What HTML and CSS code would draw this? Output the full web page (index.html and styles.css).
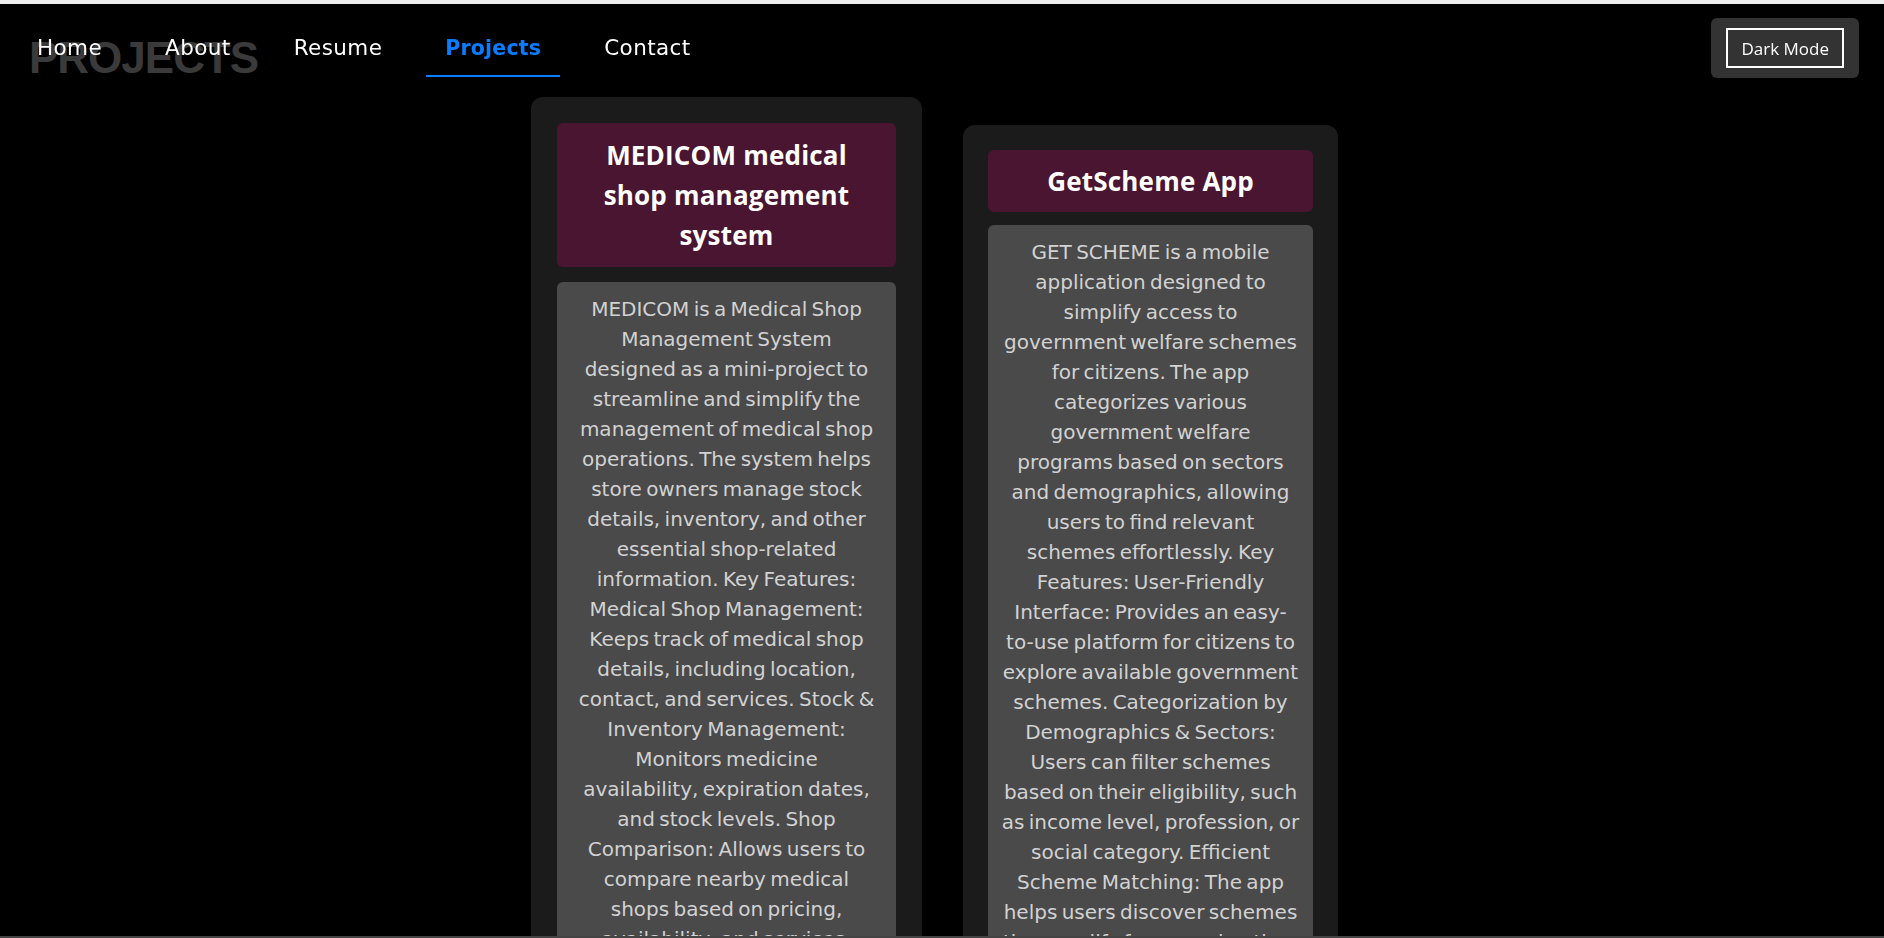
FILE: index.html
```html
<!DOCTYPE html>
<html lang="en">
<head>
<meta charset="utf-8">
<title>Projects</title>
<link rel="stylesheet" href="styles.css">
</head>
<body>
<header class="site-header">
  <nav class="nav">
    <a class="nav-link" href="#">Home</a>
    <a class="nav-link" href="#">About</a>
    <a class="nav-link" href="#">Resume</a>
    <a class="nav-link active" href="#">Projects</a>
    <a class="nav-link" href="#">Contact</a>
  </nav>
  <div class="theme-box">
    <button class="theme-btn">Dark Mode</button>
  </div>
</header>

<main class="projects">
  <h2 class="projects-title">PROJECTS</h2>
  <div class="card-row">
    <article class="card card-wide">
      <h3 class="card-title">MEDICOM medical shop management system</h3>
      <p class="card-desc">MEDICOM is a Medical Shop Management System designed as a mini-project to streamline and simplify the management of medical shop operations. The system helps store owners manage stock details, inventory, and other essential shop-related information. Key Features: Medical Shop Management: Keeps track of medical shop details, including location, contact, and services. Stock &amp; Inventory Management: Monitors medicine availability, expiration dates, and stock levels. Shop Comparison: Allows users to compare nearby medical shops based on pricing, availability, and services. Billing System: Generates bills and maintains records of sales transactions.</p>
    </article>
    <article class="card card-narrow">
      <h3 class="card-title">GetScheme App</h3>
      <p class="card-desc">GET SCHEME is a mobile application designed to simplify access to government welfare schemes for citizens. The app categorizes various government welfare programs based on sectors and demographics, allowing users to find relevant schemes effortlessly. Key Features: User-Friendly Interface: Provides an easy-to-use platform for citizens to explore available government schemes. Categorization by Demographics &amp; Sectors: Users can filter schemes based on their eligibility, such as income level, profession, or social category. Efficient Scheme Matching: The app helps users discover schemes they qualify for, ensuring they receive the benefits they are entitled to.</p>
    </article>
  </div>
</main>
<div class="window-edge"></div>
</body>
</html>
```

FILE: styles.css
```css
* { box-sizing: border-box; }

html { background: #000; }

body {
  margin: 0;
  background: #000;
  color: #fff;
  font-family: "DejaVu Sans", "Open Sans", sans-serif;
  border-top: 4px solid #efefef;
  min-height: 100vh;
}

.site-header {
  position: fixed;
  top: 4px;
  left: 0;
  right: 0;
  display: flex;
  justify-content: space-between;
  align-items: flex-start;
  padding: 0 25px 0 18px;
  z-index: 10;
}

.nav {
  display: flex;
  gap: 25px;
  margin-top: 17px;
}

.nav-link {
  display: block;
  padding: 12px 19px;
  font-size: 21.5px;
  letter-spacing: 0.4px;
  line-height: 30px;
  color: #fff;
  text-decoration: none;
  border-bottom: 2px solid transparent;
}

.nav-link.active {
  color: #0a7cff;
  font-weight: 700;
  font-size: 20.5px;
  letter-spacing: 0.2px;
  border-bottom-color: #0a7cff;
}

.theme-box {
  margin-top: 14px;
  padding: 10px 15px;
  background: #333;
  border-radius: 6px;
}

.theme-btn {
  display: block;
  height: 40px;
  padding: 0 13px;
  background: transparent;
  border: 2px solid #fff;
  color: #fff;
  font-family: "Open Sans", sans-serif;
  font-size: 17px;
}

.projects {
  padding: 31px 41px 0 29px;
}

.projects-title {
  margin: 0;
  font-family: "Liberation Sans", sans-serif;
  font-weight: 700;
  font-size: 44px;
  letter-spacing: -1px;
  line-height: 45px;
  color: #3a3a3a;
}

.card-row {
  display: flex;
  justify-content: center;
  align-items: center;
  gap: 41px;
  margin-top: 17px;
  margin-left: -3px;
}

.card {
  background: #1b1b1b;
  border-radius: 12px;
  padding: 26px;
}

.card-wide { flex: 0 0 391px; }
.card-narrow { flex: 0 0 375px; padding: 25px; }

.card-title {
  margin: 0 0 15px;
  padding: 12px 20px;
  background: #4a1530;
  border-radius: 6px;
  font-family: "Open Sans", sans-serif;
  font-size: 26px;
  font-weight: 700;
  letter-spacing: 0.2px;
  line-height: 40px;
  text-align: center;
  color: #fff;
}

.card-narrow .card-title { padding: 11px 20px; margin-bottom: 13px; }

.card-desc {
  margin: 0;
  padding: 12px 20.75px;
  background: #4a4a4a;
  border-radius: 6px;
  font-size: 20px;
  word-spacing: -2px;
  line-height: 30px;
  text-align: center;
  color: #d2d2d2;
}

.card-narrow .card-desc { padding: 12px 13.25px; }

.window-edge {
  position: fixed;
  left: 0;
  right: 0;
  bottom: 0;
  height: 2px;
  background: #444;
}
```
